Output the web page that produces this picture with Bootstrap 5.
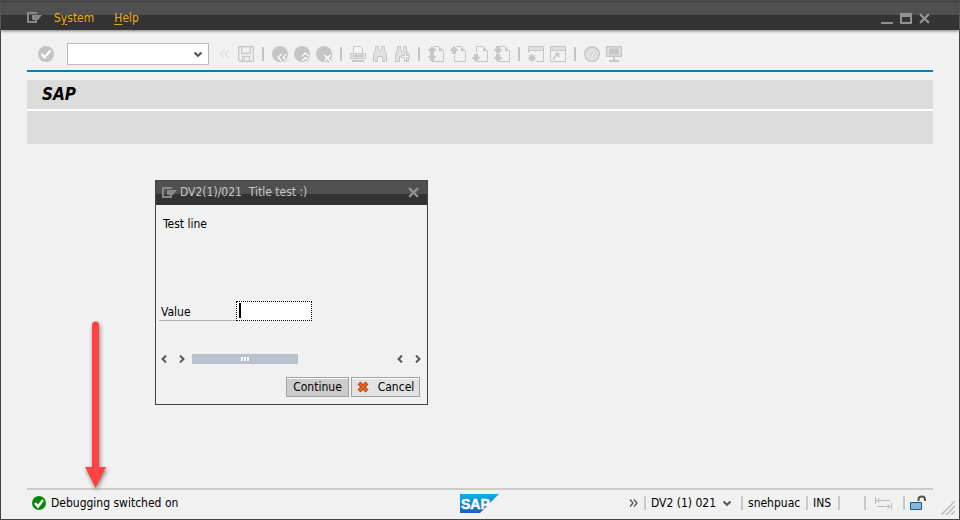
<!DOCTYPE html>
<html lang="en">
<head>
<meta charset="utf-8">
<meta name="viewport" content="width=device-width, initial-scale=1">
<title>SAP</title>
<link href="https://cdn.jsdelivr.net/npm/bootstrap@5.3.0/dist/css/bootstrap.min.css" rel="stylesheet">
<style>
body{font-family:"DejaVu Sans Condensed","Noto Sans",sans-serif;font-size:12px;line-height:16px;color:#000;background:#f1f1f1}
svg{display:block;flex:none}
button{font:inherit;color:inherit}
.frame{border:1px solid #444;min-height:100vh}
.bare{border:0;background:none;padding:0;display:block}
.titlebar{height:29px;padding:4px 29px 0 26px;background:linear-gradient(#404040 1px,#505050 1px 14px,#333 14px);box-shadow:0 1px 3px #777}
.menu a{color:#f0ab1c;text-decoration:none}
.menu u{text-underline-offset:2px}
.menu{gap:20px;margin-left:12px}
.controls{gap:7px;padding-top:2px}
.inset{margin:0 26px}
.tools{height:42px;padding:8px 0 0 11px;border-bottom:2px solid #007cc0;gap:6px;color:#c6c6c6}
.command{width:142px;height:22px;margin:0 1px 0 7px;border:1px solid #bbb;border-radius:0;font-size:12px;padding:0 24px 0 4px;background:#fff url("data:image/svg+xml,%3Csvg xmlns='http://www.w3.org/2000/svg' viewBox='0 0 10 7'%3E%3Cpath d='M1.5 1.5 5 4.8 8.500 1.500' fill='none' stroke='%23555' stroke-width='2.200'/%3E%3C/svg%3E") no-repeat right 5px center/10px 7px}
.bar{width:2px;height:14px;margin:0 2px;background:#c3c3c3}
.heading{margin-top:8px;height:31px;background:#dcdcdc;border-bottom:2px solid #fff;padding:4px 15px}
.heading h1{font-size:17px;line-height:20px;font-weight:bold;font-style:italic;margin:0}
.subbar{height:33px;background:#dcdcdc}
.workspace{padding:36px 0 0 154px}
.dialog-box{width:273px;border:1px solid #444;background:#f1f1f1}
.dialog-title{height:24px;background:linear-gradient(#505050 13px,#333 13px);color:#c8c8c8;padding:0 8px 2px 6px;gap:3px}
.dialog-content{padding:11px 7px 7px 3px}
.dialog-content p{margin:0 0 69px 4px}
.field{height:20px}
.field label{width:77px;border-bottom:1px solid #b5b5b5;padding:3px 2px 0}
.field input{display:block;width:76px;height:20px;border:1px dotted #000;border-radius:0;padding:0 5px;outline:0;background:#fff}
.caret{position:absolute;left:3px;top:2px;width:2px;height:15px;background:#000}
.scroller{height:16px;margin:30px -1px 10px 2px;color:#555}
.thumb{width:106px;height:10px;margin-left:7px;background:#b8c2cc}
.act{height:20px;border:1px solid #a2a2a2;border-radius:0;padding:0;background:#e2e2e2;box-shadow:inset 0 1px #fff;line-height:18px}
.actions{gap:2px}
.continue{width:63px;background:#ccc}
.cancel{width:69px;gap:9px}
.pointer{position:absolute;left:78px;bottom:-3px;filter:drop-shadow(1px 2px 2px #0007)}
.status{border-top:2px solid #ccc;height:31px;padding:0 7px 3px 5px}
.side{flex:1 1 0}
.message{gap:5px}
.more{margin-right:6px}
.cell{height:14px;line-height:16px;display:flex;align-items:center;border-left:2px solid #c8c8c8;padding-left:5px;white-space:nowrap}
.system-cell{width:97px;gap:6px}.user-cell{width:65px}.mode-cell{width:32px}.blank-cell{width:26px}.swap-cell{width:39px;padding-left:9px}.lock-cell{width:23px}
.grip{position:absolute;right:4px;bottom:4px}
</style>
<script src="https://cdn.jsdelivr.net/npm/bootstrap@5.3.0/dist/js/bootstrap.bundle.min.js"></script>
</head>
<body>
<svg width="0" height="0" class="position-absolute" aria-hidden="true">
<defs>
<symbol id="exit" viewBox="0 0 15 11"><path d="M10 1H1v9h8V8" fill="none" stroke="#888" stroke-width="2"/><path d="M5 3h10l-4 5H5z" fill="#888"/></symbol>
<symbol id="close" viewBox="0 0 10 10"><path d="m1 1 8 8m0-8L1 9" fill="none" stroke="#929292" stroke-width="2"/></symbol>
<symbol id="prev" viewBox="0 0 6 8"><path d="M5 .6 1.600 4 5 7.400" fill="none" stroke="currentColor" stroke-width="2"/></symbol>
<symbol id="next" viewBox="0 0 6 8"><path d="M1 .6 4.400 4 1 7.400" fill="none" stroke="currentColor" stroke-width="2"/></symbol>
<symbol id="sheet" viewBox="0 0 16 16"><path d="M6 .5h5l4.500 4.500v10.500H4.500V14" fill="none" stroke="currentColor"/><path d="M11 1v4h4z" fill="currentColor"/></symbol>
<symbol id="up" viewBox="0 0 8 8"><path d="M4 0 8 4v1H6v3H2V5H0V4z" fill="currentColor"/></symbol>
<symbol id="down" viewBox="0 0 8 8"><path d="M4 8 0 4V3h2V0h4v3h2v1z" fill="currentColor"/></symbol>
<symbol id="glasses" viewBox="0 0 16 16"><path d="M3.500.5h3v3l1 1v1h1v-1l1-1v-3h3v3l2 5v7h-4v-5h-5v5h-4v-7l2-5z" fill="#e2e2e2" stroke="currentColor"/></symbol>
</defs>
</svg>
<div class="frame d-flex flex-column position-relative">
<header class="titlebar d-flex align-items-center">
  <button class="bare" aria-label="Session menu"><svg width="15" height="11"><use href="#exit"/></svg></button>
  <nav class="menu d-flex flex-grow-1"><a href="#">S<u>y</u>stem</a><a href="#"><u>H</u>elp</a></nav>
  <div class="controls d-flex align-items-center">
  <button class="bare" aria-label="Minimize"><svg width="12" height="11"><path d="M0 10h12" stroke="#929292" stroke-width="2"/></svg></button>
  <button class="bare" aria-label="Maximize"><svg width="12" height="11"><path d="M1 0v10h10V0" fill="none" stroke="#929292" stroke-width="2"/><path d="M0 2h12" stroke="#929292" stroke-width="4"/></svg></button>
  <button class="bare" aria-label="Close"><svg width="11" height="11"><use href="#close"/></svg></button>
  </div>
</header>
<div class="inset">
<div class="tools d-flex align-items-center" role="toolbar" aria-label="Standard">
  <button class="bare" aria-label="Enter"><svg width="16" height="16"><circle cx="8" cy="8" r="8" fill="#c3c3c3"/><path d="m3.500 8 3 3.500 6-7" fill="none" stroke="#fff" stroke-width="2.400"/></svg></button>
  <select class="command form-select" aria-label="Command"><option></option></select>
  <button class="bare" aria-label="Collapse"><svg width="16" height="16" fill="none" stroke="#dedede" stroke-width="1.500"><path d="M8 4.500 4.500 8 8 11.500M12.500 4.500 9 8l3.500 3.500"/></svg></button>
  <button class="bare" aria-label="Save"><svg width="16" height="16" fill="none" stroke="currentColor" stroke-width="1.300"><path d="M.7.7h14.600v14.600h-13L.7 13.700zM3.700.7v6.600h8.600V.7M4.500 15v-4.500h7V15M6.500 12v2" /></svg></button>
  <span class="bar"></span>
  <button class="bare" aria-label="Back"><svg width="16" height="16"><circle cx="8" cy="8" r="8" fill="currentColor"/><path d="M9.500 8 6 11.500 9.500 15M14.500 8 11 11.500l3.500 3.500" fill="none" stroke="#bbb" stroke-width="3"/><path d="M9.500 8 6 11.500 9.500 15M14.500 8 11 11.500l3.500 3.500" fill="none" stroke="#f7f7f7" stroke-width="1.700"/></svg></button>
  <button class="bare" aria-label="Exit"><svg width="16" height="16"><circle cx="8" cy="8" r="8" fill="currentColor"/><path d="m8 10.500 3.500-3.500 3.500 3.500M8 15l3.500-3.500L15 15" fill="none" stroke="#bbb" stroke-width="3"/><path d="m8 10.500 3.500-3.500 3.500 3.500M8 15l3.500-3.500L15 15" fill="none" stroke="#f7f7f7" stroke-width="1.700"/></svg></button>
  <button class="bare" aria-label="Cancel session"><svg width="16" height="16"><circle cx="8" cy="8" r="8" fill="currentColor"/><path d="m8.500 9 6 6m0-6-6 6" stroke="#bbb" stroke-width="4"/><path d="m8.500 9 6 6m0-6-6 6" stroke="#f7f7f7" stroke-width="2"/></svg></button>
  <span class="bar"></span>
  <button class="bare" aria-label="Print"><svg width="16" height="16"><path d="M3.500 7V.5H10L12.500 3v4" fill="#f4f4f4" stroke="currentColor"/><path d="M.5 7.500h15v5H.5z" fill="#e2e2e2" stroke="currentColor"/><path d="M3 10h10M2 15h12" stroke="currentColor" stroke-width="2"/></svg></button>
  <button class="bare" aria-label="Find"><svg width="16" height="16"><use href="#glasses"/></svg></button>
  <button class="bare" aria-label="Find next"><svg width="16" height="16"><use href="#glasses"/><path d="M10.500 6.500h2v3h3v2h-3v3h-2v-3h-3v-2h3z" fill="#f4f4f4" stroke="currentColor"/></svg></button>
  <span class="bar"></span>
  <button class="bare" aria-label="First page"><svg width="16" height="16"><use href="#sheet" width="16" height="16"/><use href="#up" width="8" height="8"/><use href="#up" y="7" width="8" height="8"/></svg></button>
  <button class="bare" aria-label="Previous page"><svg width="16" height="16"><path d="M4.500 9v6.500" stroke="currentColor"/><use href="#sheet" width="16" height="16"/><use href="#up" width="8" height="8"/></svg></button>
  <button class="bare" aria-label="Next page"><svg width="16" height="16"><path d="M4.500 7V.5H7" fill="none" stroke="currentColor"/><use href="#sheet" width="16" height="16"/><use href="#down" y="8" width="8" height="8"/></svg></button>
  <button class="bare" aria-label="Last page"><svg width="16" height="16"><use href="#sheet" width="16" height="16"/><use href="#down" width="8" height="8"/><use href="#down" y="8" width="8" height="8"/></svg></button>
  <span class="bar"></span>
  <button class="bare" aria-label="New session"><svg width="16" height="16"><path d="M.5 7V.5h15v15H8M.5 4.500h15" fill="none" stroke="currentColor"/><path d="M1 1h14v3H1z" fill="#e0e0e0"/><path d="M4 8v8M0 12h8M1.200 9.200l5.600 5.600m0-5.600-5.600 5.600" stroke="currentColor" stroke-width="1.400"/></svg></button>
  <button class="bare" aria-label="Create shortcut"><svg width="16" height="16"><path d="M.5.5h15v15H.5zM.5 4.500h15" fill="none" stroke="currentColor"/><path d="M1 1h14v3H1z" fill="#e0e0e0"/><path d="M3.500 14c0-3 1-4 4-5M5 7.500h3.500V11" fill="none" stroke="currentColor" stroke-width="1.500"/></svg></button>
  <span class="bar"></span>
  <button class="bare" aria-label="Help"><svg width="16" height="16"><circle cx="8" cy="8" r="7.300" fill="#e1e1e1" stroke="currentColor" stroke-width="1.400"/><path d="M5.300 6.200C5.500 3.500 10.700 3.500 10.700 6c0 2-2.700 2-2.700 4m0 1v2" fill="none" stroke="#c6c6c6" stroke-width="3"/><path d="M5.300 6.200C5.500 3.500 10.700 3.500 10.700 6c0 2-2.700 2-2.700 4m0 1v2" fill="none" stroke="#f5f5f5" stroke-width="1.500"/></svg></button>
  <button class="bare" aria-label="Customize layout"><svg width="16" height="16"><path d="M.7.7h14.600v9.600H.7z" fill="#e5e5e5" stroke="currentColor" stroke-width="1.400"/><path d="M3 2.500h10v6H3zM7 11h2v3H7zM3 14h10v2H3z" fill="currentColor"/></svg></button>
</div>
<div class="heading"><h1>SAP</h1></div>
<div class="subbar"></div>
</div>
<main class="workspace flex-grow-1 position-relative">
  <section class="dialog-box" role="dialog" aria-labelledby="dialog-name">
    <div class="dialog-title d-flex align-items-center"><svg width="15" height="11"><use href="#exit"/></svg><span id="dialog-name" class="flex-grow-1">DV2(1)/021&nbsp; Title test :)</span><button class="bare" aria-label="Close dialog"><svg width="11" height="11"><use href="#close"/></svg></button></div>
    <div class="dialog-content">
      <p>Test line</p>
      <div class="field d-flex"><label for="value">Value</label><div class="position-relative"><input id="value" type="text"><span class="caret"></span></div></div>
      <div class="scroller d-flex align-items-center">
        <button class="bare" aria-label="Scroll left"><svg width="6" height="8"><use href="#prev"/></svg></button>
        <button class="bare" aria-label="Scroll right"><svg width="18" height="8"><use href="#next" x="12" width="6" height="8"/></svg></button>
        <div class="thumb d-flex justify-content-center align-items-center"><svg width="8" height="4"><path d="M0 0h2v4H0zM3 0h2v4H3zM6 0h2v4H6z" fill="#fff"/></svg></div>
        <button class="bare ms-auto" aria-label="Scroll left"><svg width="18" height="8"><use href="#prev" width="6" height="8"/></svg></button>
        <button class="bare" aria-label="Scroll right"><svg width="6" height="8"><use href="#next"/></svg></button>
      </div>
      <div class="actions d-flex justify-content-end"><button class="act continue">Continue</button><button class="act cancel d-flex align-items-center justify-content-center"><svg width="12" height="12"><path d="m2 2 8 8m0-8-8 8" stroke="#b74720" stroke-width="4"/><path d="m2 2 8 8m0-8-8 8" stroke="#e9641c" stroke-width="2"/></svg>Cancel</button></div>
    </div>
  </section>
  <svg class="pointer" width="34" height="170" aria-hidden="true"><path d="M13 4a3.500 3.500 0 0 1 7 0v142h7l-10.500 21L6 146h7z" fill="#ff4343"/></svg>
</main>
<footer class="status inset d-flex align-items-center">
  <div class="side message d-flex align-items-center" role="status"><svg width="14" height="14"><circle cx="7" cy="7" r="7" fill="#078a0c"/><path d="m3 7 3 3.500L11 4" fill="none" stroke="#fff" stroke-width="2.400"/></svg><span>Debugging switched on</span></div>
  <svg width="39" height="19" role="img" aria-label="SAP"><defs><linearGradient id="blue" x2="0" y2="1"><stop stop-color="#0ab0ea"/><stop offset="1" stop-color="#1b5fbd"/></linearGradient></defs><path d="M0 0h39L20 19H0z" fill="url(#blue)"/><text x="1" y="15" font-family="Liberation Sans,sans-serif" font-size="14" font-weight="bold" fill="#fff" stroke="#fff" stroke-width=".5">SAP</text></svg>
  <div class="side d-flex align-items-center justify-content-end">
    <button class="bare more" aria-label="More"><svg width="9" height="8" fill="none" stroke="#555" stroke-width="1.300"><path d="m1 .5 3 3.500-3 3.500M5 .5 8 4 5 7.500"/></svg></button>
    <button class="bare cell system-cell">DV2 (1) 021<svg width="10" height="7"><path d="M1.500 1.500 5 4.800 8.500 1.500" fill="none" stroke="#555" stroke-width="2"/></svg></button>
    <span class="cell user-cell">snehpuac</span><span class="cell mode-cell">INS</span><span class="cell blank-cell"></span>
    <span class="cell swap-cell"><svg width="17" height="13" fill="none" stroke="#bbb"><path d="M.5 0v7M1 3.500h14M4.500 1 2 3.500 4.500 6M16.500 6v7M2 9.500h14M12.500 7 15 9.500 12.500 12"/></svg></span>
    <span class="cell lock-cell"><svg width="16" height="16"><path d="M.5 7.500h11v7H.5z" fill="#8ab5d8" stroke="#175b87"/><path d="M8.500 6V4.500C8.500.5 15 .5 15 4.500V6" fill="none" stroke="#555" stroke-width="2"/></svg></span>
  </div>
</footer>
<svg class="grip" width="14" height="14" stroke="#bcbcbc" stroke-width="1.500"><path d="M0 14 14 0M5 14l9-9M10 14l4-4"/></svg>
</div>
</body>
</html>
